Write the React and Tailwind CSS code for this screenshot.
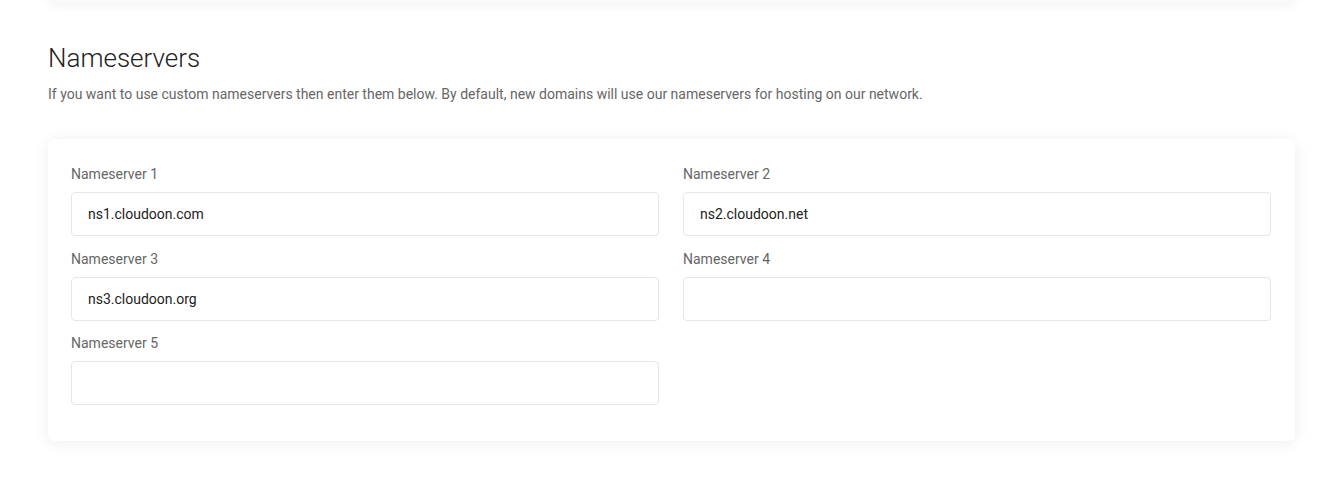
import React from "react";

const fields = [
  { label: "Nameserver 1", value: "ns1.cloudoon.com" },
  { label: "Nameserver 2", value: "ns2.cloudoon.net" },
  { label: "Nameserver 3", value: "ns3.cloudoon.org" },
  { label: "Nameserver 4", value: "" },
  { label: "Nameserver 5", value: "" },
];

export default function App() {
  return (
    <div
      className="min-h-[481px] bg-white overflow-hidden"
      style={{ fontFamily: "Roboto, 'Liberation Sans', sans-serif" }}
    >
      <div className="ml-[48px] w-[1247px] h-[20px] -mt-[17px] bg-[#fafafa] rounded-b-[6px] shadow-[0_2px_12px_rgba(0,0,0,0.06)]" />
      <div className="pl-[48px] pt-[40px]">
        <h2 className="text-[26px] leading-[31px] font-light text-[#222] mb-[10px]">
          Nameservers
        </h2>
        <p className="text-[14px] leading-[21px] text-[#666]">
          If you want to use custom nameservers then enter them below. By default, new domains will use our nameservers for hosting on our network.
        </p>
        <div className="mt-[34px] w-[1247px] bg-white rounded-[6px] shadow-[0_2px_16px_rgba(0,0,0,0.07)] pl-[23px] pr-[24px] pt-[25px] pb-[23px]">
          <div className="grid grid-cols-2 gap-x-[24px]">
            {fields.map((f) => (
              <div key={f.label} className="mb-[12.5px]">
                <label className="block text-[14px] leading-[21px] text-[#666] mb-[7px]">
                  {f.label}
                </label>
                <input
                  readOnly
                  value={f.value}
                  className="block w-full h-[44px] px-[16px] border border-[#e6e6e6] rounded-[4px] text-[14px] text-[#222] bg-white outline-none"
                  style={{ fontFamily: "Roboto, 'Liberation Sans', sans-serif" }}
                />
              </div>
            ))}
          </div>
        </div>
      </div>
    </div>
  );
}
